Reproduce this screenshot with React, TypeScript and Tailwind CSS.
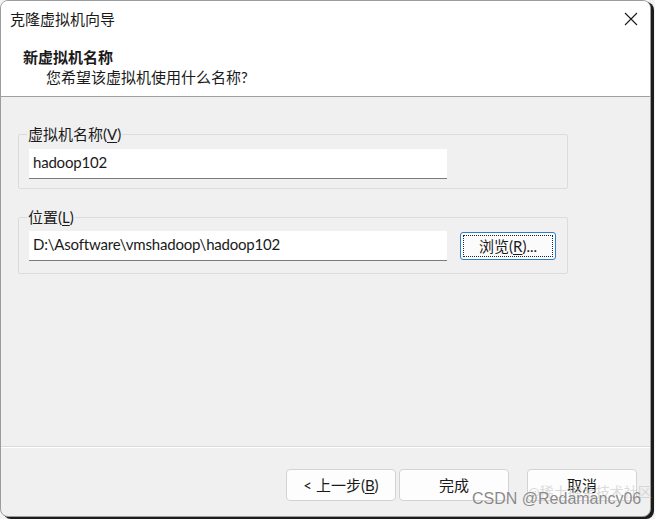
import React from "react";

const font = "font-['Lato','Noto_Sans_CJK_SC',sans-serif]";

function GroupBox({ label, accel, children, className }: { label: string; accel: string; children: React.ReactNode; className?: string }) {
  return (
    <fieldset className={`w-[550px] border border-[#dcdcdc] rounded-[2px] px-[10px] ${className ?? ""}`}>
      <legend className="px-[1px] ml-[-2px] text-[15px] leading-[20px] text-[#1a1a1a]">
        {label}(<span className="underline underline-offset-[2px]">{accel}</span>)
      </legend>
      {children}
    </fieldset>
  );
}

function TextBox({ value }: { value: string }) {
  return (
    <div className="w-[418px] h-[30px] bg-white border-b border-[#7b7b7b] flex items-start pl-[4px] pt-[3px] text-[15px] tracking-[-0.2px] leading-[20px] text-[#1a1a1a]">
      {value}
    </div>
  );
}

function DlgButton({ children }: { children: React.ReactNode }) {
  return (
    <button className="w-[110px] h-[32px] rounded-[4px] border border-[#d3d3d3] bg-[#fdfdfd] text-[15px] leading-[20px] text-[#1a1a1a] flex items-center justify-center">
      {children}
    </button>
  );
}

export default function App() {
  return (
    <div className={`w-[655px] h-[519px] bg-[#f3f3f3] ${font} relative overflow-hidden`}>
      <div className="w-[651px] h-[517px] rounded-[8px] border border-[#9c9c9c] bg-[#f0f0f0] overflow-hidden flex flex-col shadow-[3px_2px_0_#1c1c1c]">
        {/* white header area */}
        <div className="bg-white h-[96px] flex flex-col border-b border-[#a0a0a0]">
          <div className="h-[38px] flex items-center justify-between pl-[9px] pr-[12px]">
            <span className="text-[15px] leading-[20px] text-[#1a1a1a] mt-[-2px]">克隆虚拟机向导</span>
            <svg width="14" height="14" viewBox="0 0 14 14" className="mt-[-2px]">
              <path d="M1 1 L13 13 M13 1 L1 13" stroke="#1a1a1a" strokeWidth="1.1" fill="none" />
            </svg>
          </div>
          <div className="pl-[22px] pt-[8px] text-[15px] leading-[20px] font-bold text-[#1a1a1a]">新虚拟机名称</div>
          <div className="pl-[45px] text-[15px] leading-[20px] text-[#1a1a1a]">您希望该虚拟机使用什么名称?</div>
        </div>

        {/* body */}
        <div className="flex-1 flex flex-col pl-[17px] pt-[27px]">
          <GroupBox label="虚拟机名称" accel="V" className="pb-[9px]">
            <div className="mt-[5px]">
              <TextBox value="hadoop102" />
            </div>
          </GroupBox>
          <GroupBox label="位置" accel="L" className="mt-[18px] pb-[12px]">
            <div className="mt-[4px] flex items-start gap-[13px]">
              <TextBox value="D:\Asoftware\vmshadoop\hadoop102" />
              <button className="mt-[1px] w-[96px] h-[28px] rounded-[3px] border border-[#2b7fd0] bg-[#fbfbfb] p-[2px]">
                <div className="w-full h-full border border-dotted border-[#222] flex items-center justify-center text-[15px] leading-[20px] text-[#1a1a1a]">
                  浏览(<span className="underline underline-offset-[2px]">R</span>)...
                </div>
              </button>
            </div>
          </GroupBox>
        </div>

        {/* footer */}
        <div className="h-[70px] border-t border-[#dadada] shadow-[inset_0_1px_0_#ffffff] flex items-start pt-[22px] pl-[285px]">
          <DlgButton>
            &lt; 上一步(<span className="underline underline-offset-[2px]">B</span>)
          </DlgButton>
          <div className="ml-[3px]">
            <DlgButton>完成</DlgButton>
          </div>
          <div className="ml-[18px]">
            <DlgButton>取消</DlgButton>
          </div>
        </div>
      </div>

      {/* watermark overlay */}
      <div className="absolute left-[528px] top-[483px] whitespace-nowrap text-[14px] leading-[18px] text-[#c4c4c4] opacity-60 pointer-events-none">@稀土掘金技术社区</div>
      <div className="absolute left-[472px] top-[488px] whitespace-nowrap text-[16px] leading-[22px] text-[#8a8a8a] font-['Liberation_Sans',sans-serif] pointer-events-none [text-shadow:0_0_1px_#ffffff]">
        CSDN @Redamancy06
      </div>
    </div>
  );
}
